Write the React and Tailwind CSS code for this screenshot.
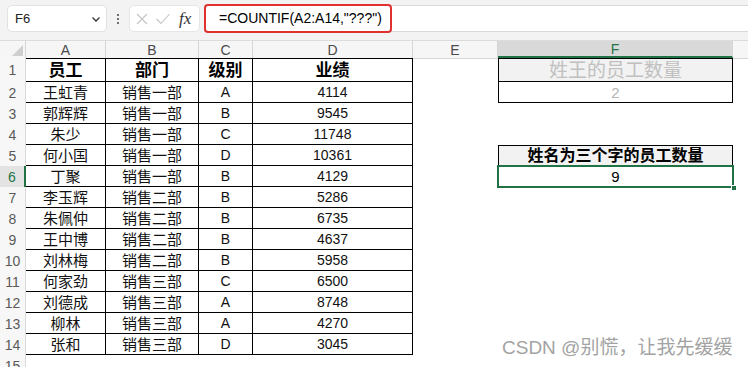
import React from 'react';

const FONT = { fontFamily: '"Liberation Sans", "Noto Sans CJK SC", sans-serif' };

// 表格数据
const rows = [
  ['王虹青', '销售一部', 'A', 4114],
  ['郭辉辉', '销售一部', 'B', 9545],
  ['朱少', '销售一部', 'C', 11748],
  ['何小国', '销售一部', 'D', 10361],
  ['丁聚', '销售一部', 'B', 4129],
  ['李玉辉', '销售二部', 'B', 5286],
  ['朱佩仲', '销售二部', 'B', 6735],
  ['王中博', '销售二部', 'B', 4637],
  ['刘林梅', '销售二部', 'B', 5958],
  ['何家劲', '销售三部', 'C', 6500],
  ['刘德成', '销售三部', 'A', 8748],
  ['柳林', '销售三部', 'A', 4270],
  ['张和', '销售三部', 'D', 3045],
];

const Cell = ({ w, className = '', children }) => (
  <div className={`${w} shrink-0 h-full flex items-center justify-center leading-none ${className}`}>
    {children}
  </div>
);

const RowHead = ({ n, active }) => (
  <Cell
    w="w-[26px]"
    className={
      active
        ? 'bg-[#e3e3e3] text-[#217346] border-r-2 border-[#217346] text-[14px]'
        : 'bg-[#f7f7f7] text-[#5a5a5a] border-r border-[#dadada] text-[14px]'
    }
  >
    {n}
  </Cell>
);

const FCell = ({ n }) => {
  if (n === 1)
    return (
      <Cell w="w-[235px]" className="border-x border-y border-black bg-[#f2f2f2] text-[19px] text-[#c0c0c0]">
        姓王的员工数量
      </Cell>
    );
  if (n === 2)
    return (
      <Cell w="w-[235px]" className="border-x border-b border-black text-[15px] text-[#b5b5b5]">
        2
      </Cell>
    );
  if (n === 5)
    return (
      <Cell w="w-[235px]" className="border-x border-y border-black bg-[#f2f2f2] text-[16px] font-bold text-black">
        姓名为三个字的员工数量
      </Cell>
    );
  if (n === 6)
    return (
      <Cell w="w-[235px]" className="relative text-[15px] text-black">
        9
        <div className="absolute -top-px -left-px -right-px -bottom-px border-2 border-[#217346]" />
        <div className="absolute -right-[4px] -bottom-[4px] w-[6px] h-[6px] bg-[#217346] border border-white" />
      </Cell>
    );
  return <Cell w="w-[235px]" />;
};

export default function App() {
  return (
    <div className="w-[748px] h-[367px] overflow-hidden bg-white relative" style={FONT}>
      {/* 工具栏 / 编辑栏 */}
      <div className="h-[40px] bg-[#f3f3f3] flex items-start pt-[5px]">
        <div className="ml-[7px] w-[100px] h-[27px] bg-white border border-[#e2e2e2] rounded-[5px] flex items-center justify-between pl-[7px] pr-[4px] text-[13px] text-[#222]">
          <span>F6</span>
          <svg width="12" height="12" viewBox="0 0 12 12" fill="none" stroke="#333" strokeWidth="1.3">
            <path d="M2.5 4.5 L6 8 L9.5 4.5" />
          </svg>
        </div>
        <div className="w-[22px] h-[27px] flex flex-col items-center justify-center gap-[2px]">
          <span className="w-[2px] h-[2px] bg-[#444] rounded-full" />
          <span className="w-[2px] h-[2px] bg-[#444] rounded-full" />
          <span className="w-[2px] h-[2px] bg-[#444] rounded-full" />
        </div>
        <div className="w-[71px] h-[27px] bg-white border border-[#e6e6e6] rounded-[5px] flex items-center pl-[5px]">
          <svg width="14" height="14" viewBox="0 0 14 14" fill="none" stroke="#c4c4c4" strokeWidth="1.1">
            <path d="M2 2 L12 12 M12 2 L2 12" />
          </svg>
          <svg className="ml-[6px]" width="16" height="14" viewBox="0 0 16 14" fill="none" stroke="#c4c4c4" strokeWidth="1.1">
            <path d="M1.5 7 L6 11.5 L14.5 2" />
          </svg>
          <span className="ml-[8px] italic text-[17px] text-[#333] leading-none" style={{ fontFamily: '"Liberation Serif", serif' }}>
            fx
          </span>
        </div>
        <div className="ml-[4px] flex-1 h-[27px] bg-white border-y border-[#d9d9d9] flex items-center">
          <div className="w-[188px] h-[29px] -mt-px -mb-px border-2 border-[#e03131] rounded-[4px] flex items-center pl-[13px] text-[14px] text-black">
            =COUNTIF(A2:A14,"???")
          </div>
        </div>
      </div>

      {/* 列标题 */}
      <div className="h-[18px] flex bg-[#f6f6f6] border-t border-[#dcdcdc] text-[14px] text-[#4a4a4a]">
        <Cell w="w-[26px]" className="relative border-r border-[#d6d6d6]">
          <svg className="absolute right-[2px] bottom-[2px]" width="11" height="11" viewBox="0 0 11 11">
            <path d="M11 0 L11 11 L0 11 Z" fill="#cfcfcf" />
          </svg>
        </Cell>
        <Cell w="w-[80px]" className="border-r border-[#d6d6d6]">A</Cell>
        <Cell w="w-[93px]" className="border-r border-[#d6d6d6]">B</Cell>
        <Cell w="w-[54px]" className="border-r border-[#d6d6d6]">C</Cell>
        <Cell w="w-[160px]" className="border-r border-[#d6d6d6]">D</Cell>
        <Cell w="w-[85px]" className="border-r border-[#d6d6d6]">E</Cell>
        <Cell w="w-[235px]" className="bg-[#d9d9d9] text-[#217346] border-b-2 border-[#217346] border-r border-r-[#d6d6d6]">F</Cell>
        <div className="flex-1" />
      </div>

      {/* 第1行 表头 */}
      <div className="h-[24px] flex">
        <RowHead n={1} />
        <Cell w="w-[80px]" className="border-y border-r border-black text-[17px] font-bold">员工</Cell>
        <Cell w="w-[93px]" className="border-y border-r border-black text-[17px] font-bold">部门</Cell>
        <Cell w="w-[54px]" className="border-y border-r border-black text-[17px] font-bold">级别</Cell>
        <Cell w="w-[160px]" className="border-y border-r border-black text-[17px] font-bold">业绩</Cell>
        <Cell w="w-[85px]" className="border-t border-[#d6d6d6]" />
        <FCell n={1} />
        <div className="flex-1 border-t border-[#d6d6d6]" />
      </div>

      {/* 数据行 */}
      {rows.map((r, i) => (
        <div key={i} className="h-[21px] flex text-[15px] text-[#111]">
          <RowHead n={i + 2} active={i + 2 === 6} />
          <Cell w="w-[80px]" className="border-b border-r border-black">{r[0]}</Cell>
          <Cell w="w-[93px]" className="border-b border-r border-black">{r[1]}</Cell>
          <Cell w="w-[54px]" className="border-b border-r border-black text-[14px]">{r[2]}</Cell>
          <Cell w="w-[160px]" className="border-b border-r border-black text-[14px]">{r[3]}</Cell>
          <Cell w="w-[85px]" />
          <FCell n={i + 2} />
          <div className="flex-1" />
        </div>
      ))}

      <div className="h-[21px] flex">
        <RowHead n={15} />
      </div>

      {/* 水印 */}
      <div className="absolute left-[502px] top-[338px] text-[19px] leading-none text-[#a3a3a3] whitespace-nowrap">
        CSDN @别慌，让我先缓缓
      </div>
    </div>
  );
}
